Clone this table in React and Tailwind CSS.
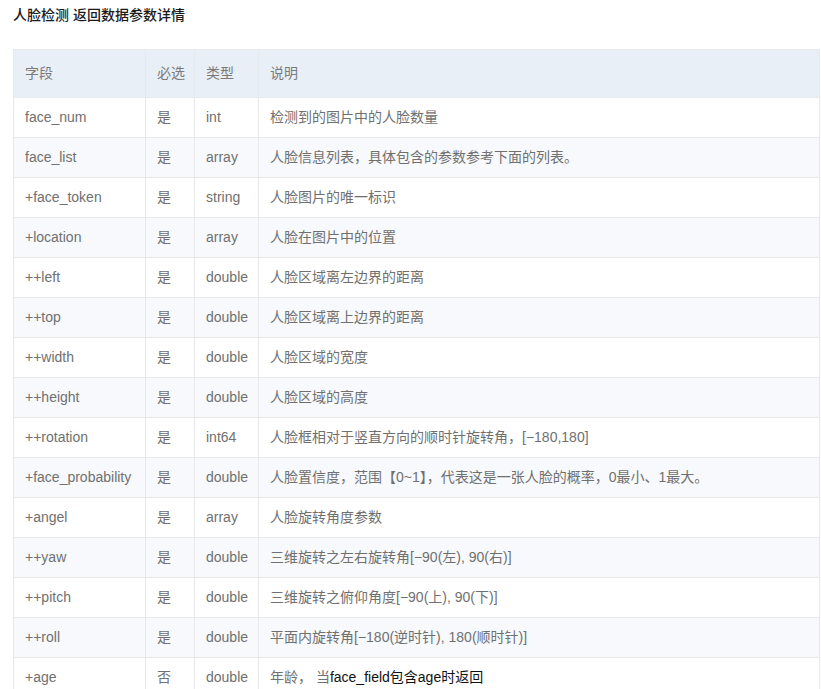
import React from 'react';

const rows = [
    ['face_num', '是', 'int', '检测到的图片中的人脸数量'],
    ['face_list', '是', 'array', '人脸信息列表，具体包含的参数参考下面的列表。'],
    ['+face_token', '是', 'string', '人脸图片的唯一标识'],
    ['+location', '是', 'array', '人脸在图片中的位置'],
    ['++left', '是', 'double', '人脸区域离左边界的距离'],
    ['++top', '是', 'double', '人脸区域离上边界的距离'],
    ['++width', '是', 'double', '人脸区域的宽度'],
    ['++height', '是', 'double', '人脸区域的高度'],
    ['++rotation', '是', 'int64', '人脸框相对于竖直方向的顺时针旋转角，[−180,180]'],
    ['+face_probability', '是', 'double', '人脸置信度，范围【0~1】，代表这是一张人脸的概率，0最小、1最大。'],
    ['+angel', '是', 'array', '人脸旋转角度参数'],
    ['++yaw', '是', 'double', '三维旋转之左右旋转角[−90(左), 90(右)]'],
    ['++pitch', '是', 'double', '三维旋转之俯仰角度[−90(上), 90(下)]'],
    ['++roll', '是', 'double', '平面内旋转角[−180(逆时针), 180(顺时针)]'],
];

export default function App() {
    return (
        <div className="min-h-screen bg-white px-[13px] pt-[5px] text-[14px]" style={{ fontFamily: '"Liberation Sans", "Noto Sans CJK SC", sans-serif' }}>
            <h3 className="h-5 leading-5 font-medium text-[#1a1a1a]">人脸检测 返回数据参数详情</h3>

            <table className="mt-[24px] w-[807px] border-collapse table-fixed text-[#707070]">
                <colgroup>
                    <col className="w-[132px]" />
                    <col className="w-[49px]" />
                    <col className="w-[64px]" />
                    <col />
                </colgroup>
                <thead>
                    <tr className="h-[48px] bg-[#e9eff7]">
                        {['字段', '必选', '类型', '说明'].map((h, i) => (
                            <th key={i} className="border border-[#e6e9ee] pl-[11px] pr-0 text-left font-normal whitespace-nowrap text-[#7a7a7a]">{h}</th>
                        ))}
                    </tr>
                </thead>
                <tbody>
                    {rows.map((r, idx) => (
                        <tr key={idx} className={`h-10 ${idx % 2 === 1 ? 'bg-[#f7f9fc]' : 'bg-white'}`}>
                            {r.map((c, i) => (
                                <td key={i} className="border border-[#e8e8e8] pl-[11px] pr-0 whitespace-nowrap">{c}</td>
                            ))}
                        </tr>
                    ))}
                    <tr className="h-10 bg-white">
                        <td className="border border-[#e8e8e8] pl-[11px]">+age</td>
                        <td className="border border-[#e8e8e8] pl-[11px]">否</td>
                        <td className="border border-[#e8e8e8] pl-[11px]">double</td>
                        <td className="border border-[#e8e8e8] pl-[11px] whitespace-nowrap">
                            年龄， 当<span className="text-[#111]">face_field包含age时返回</span>
                        </td>
                    </tr>
                </tbody>
            </table>
        </div>
    );
}
